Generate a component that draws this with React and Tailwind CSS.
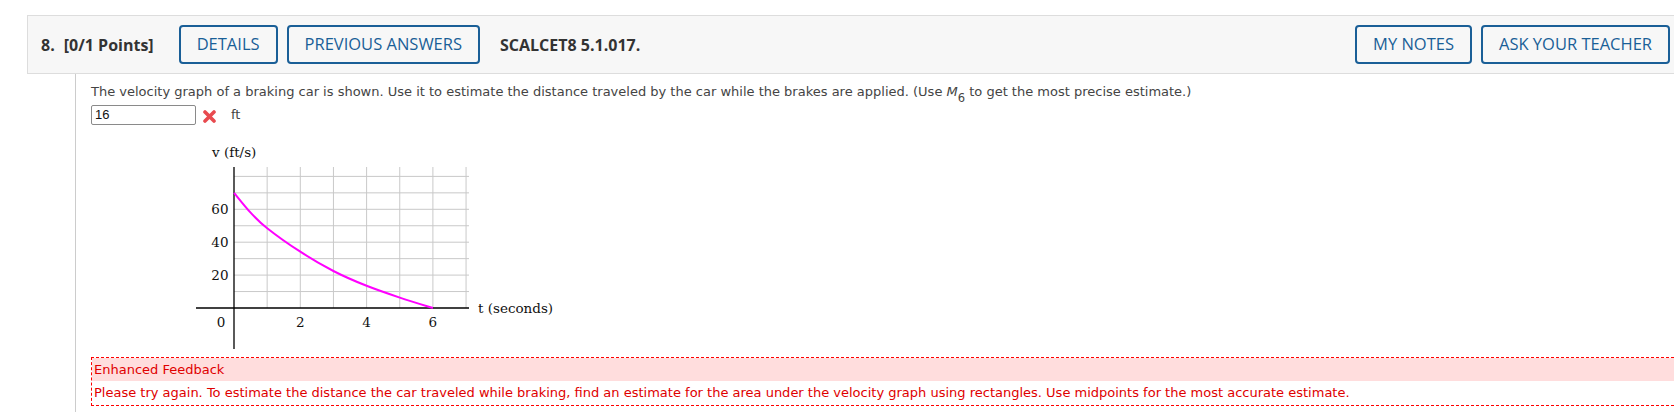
import React from 'react'

const X0 = 43
const Y0 = 170
const TX = 33.15
const VY = 1.645

// velocity samples read off the graph (t, v)
const samples = [
  [0, 70], [0.5, 58], [1, 48.5], [2, 34.2], [3, 22.5], [4, 13.5], [5, 6.3], [6, 0],
]

function toXY([t, v]) {
  return [X0 + t * TX, Y0 - v * VY]
}

// catmull-rom through the samples
function curvePath(pts) {
  const p = pts.map(toXY)
  let d = `M${p[0][0].toFixed(1)},${p[0][1].toFixed(1)}`
  for (let i = 0; i < p.length - 1; i++) {
    const a = p[i - 1] || p[i]
    const b = p[i]
    const c = p[i + 1]
    const e = p[i + 2] || c
    const c1 = [b[0] + (c[0] - a[0]) / 6, b[1] + (c[1] - a[1]) / 6]
    const c2 = [c[0] - (e[0] - b[0]) / 6, c[1] - (e[1] - b[1]) / 6]
    d += ` C${c1[0].toFixed(1)},${c1[1].toFixed(1)} ${c2[0].toFixed(1)},${c2[1].toFixed(1)} ${c[0].toFixed(1)},${c[1].toFixed(1)}`
  }
  return d
}

function Graph() {
  const serif = { fontFamily: '"DejaVu Serif", serif', fontSize: 13.5, fill: '#111' }
  return (
    <svg width="370" height="215" viewBox="0 0 370 215" className="block ml-[100px] mt-[13px]">
      {/* grid */}
      {[1, 2, 3, 4, 5, 6, 7].map(k => (
        <line key={'v' + k} x1={X0 + k * TX} y1="29" x2={X0 + k * TX} y2={Y0} stroke="#c9c9c9" strokeWidth="1" />
      ))}
      {[1, 2, 3, 4, 5, 6, 7, 8].map(k => (
        <line key={'h' + k} x1={X0} y1={Y0 - k * 10 * VY} x2="278" y2={Y0 - k * 10 * VY} stroke="#c9c9c9" strokeWidth="1" />
      ))}
      {/* axes */}
      <line x1={X0} y1="29" x2={X0} y2="211" stroke="#000" strokeWidth="1.3" />
      <line x1="5" y1={Y0} x2="278" y2={Y0} stroke="#000" strokeWidth="1.3" />
      <path d={curvePath(samples)} fill="none" stroke="#ff00ff" strokeWidth="2" />

      <text x="21" y="18.5" style={serif}>v (ft/s)</text>
      <text x="37.5" y="75.8" textAnchor="end" style={serif}>60</text>
      <text x="37.5" y="108.7" textAnchor="end" style={serif}>40</text>
      <text x="37.5" y="141.6" textAnchor="end" style={serif}>20</text>
      <text x="30" y="189" textAnchor="middle" style={serif}>0</text>
      <text x={X0 + 2 * TX} y="189" textAnchor="middle" style={serif}>2</text>
      <text x={X0 + 4 * TX} y="189" textAnchor="middle" style={serif}>4</text>
      <text x={X0 + 6 * TX} y="189" textAnchor="middle" style={serif}>6</text>
      <text x="287" y="174.5" style={serif}>t (seconds)</text>
    </svg>
  )
}

function HeadButton({ children }) {
  return (
    <button className="h-[39px] px-4 border-2 border-[#1a5f97] rounded-[4px] text-[#1a5f97] text-[16.5px] uppercase bg-transparent">
      {children}
    </button>
  )
}

function WrongMark() {
  return (
    <svg width="13" height="13" viewBox="0 0 13 13" className="block">
      <path d="M2,2 L11,11 M11,2 L2,11" stroke="#e84a4f" strokeWidth="3.6" strokeLinecap="round" />
    </svg>
  )
}

export default function App() {
  return (
    <div className="min-h-screen bg-white pt-[15px] pl-[27px] overflow-hidden">
      {/* question header */}
      <div className="flex items-center h-[59px] bg-[#f7f7f7] border-y border-l border-[#dddddd] pl-[13px] pr-[4px] font-['Open_Sans',sans-serif] text-[#333]">
        <span className="text-[16px] font-bold">8.</span>
        <span className="text-[16px] font-bold ml-[9px]">[0/1 Points]</span>
        <div className="flex gap-[9px] ml-[25px]">
          <HeadButton>Details</HeadButton>
          <HeadButton>Previous Answers</HeadButton>
        </div>
        <span className="text-[16px] font-bold ml-[20px]">SCALCET8 5.1.017.</span>
        <div className="flex gap-[9px] ml-auto">
          <HeadButton>My Notes</HeadButton>
          <HeadButton>Ask Your Teacher</HeadButton>
        </div>
      </div>

      {/* question body */}
      <div className="ml-[48px] border-l border-[#cccccc] pl-[15px] pt-[9px] pb-[20px] font-['DejaVu_Sans',Verdana,sans-serif] text-[13px] text-[#444]">
        <p className="leading-[18px] whitespace-nowrap">
          The velocity graph of a braking car is shown. Use it to estimate the distance traveled by the car while the brakes are applied. (Use{' '}
          <i>M</i><sub className="text-[11.5px] relative top-[6px]">6</sub> to get the most precise estimate.)
        </p>

        <div className="flex items-center mt-[4px] h-[20px]">
          <div className="w-[105px] h-[20px] border border-[#8a8a8a] rounded-[2px] pl-[3px] flex items-center font-['Liberation_Sans',Arial,sans-serif] text-[13px] text-[#111]">
            16
          </div>
          <div className="ml-[7px] mt-[3px]">
            <WrongMark />
          </div>
          <span className="ml-[15px]">ft</span>
        </div>

        <Graph />

        <div className="mt-[4px] border border-dashed border-[#ff0000] border-r-0 text-[#e00000]">
          <div className="h-[23px] bg-[#ffdddd] flex items-center pl-[2px]">Enhanced Feedback</div>
          <div className="h-[24px] flex items-center pl-[2px] whitespace-nowrap">
            Please try again. To estimate the distance the car traveled while braking, find an estimate for the area under the velocity graph using rectangles. Use midpoints for the most accurate estimate.
          </div>
        </div>
      </div>
    </div>
  )
}
